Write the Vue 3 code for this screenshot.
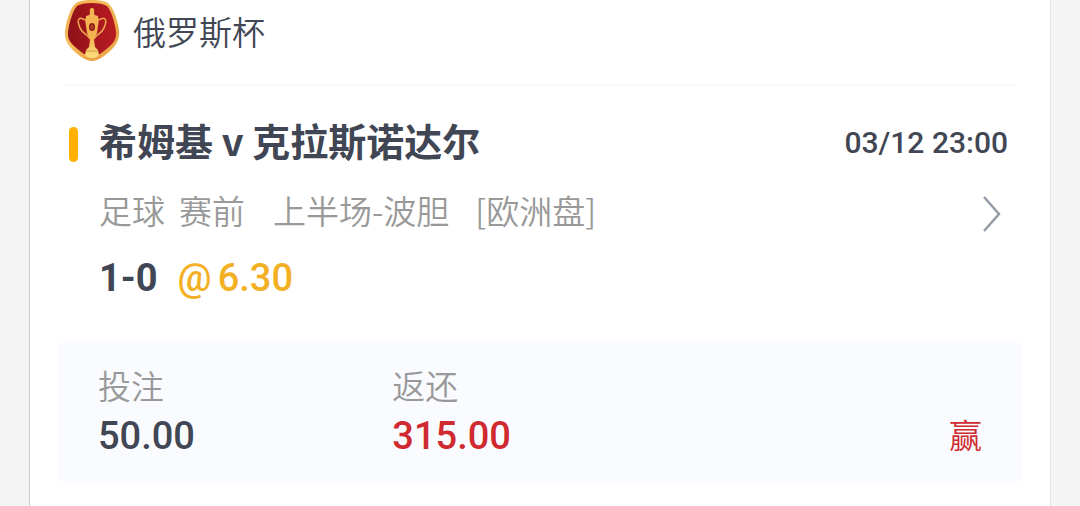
<script setup>
const bet = {
  league: '俄罗斯杯',
  match: '希姆基 v 克拉斯诺达尔',
  time: '03/12 23:00',
  sport: '足球',
  phase: '赛前',
  market: '上半场-波胆',
  oddsType: '[欧洲盘]',
  pick: '1-0',
  odds: '6.30',
  stake: '50.00',
  payout: '315.00',
  result: '赢',
}
</script>

<template>
  <main class="page">
    <article class="card">
      <header class="league">
        <svg class="crest" viewBox="0 0 56 62" aria-hidden="true">
          <defs>
            <linearGradient id="crest-gold" x1="0" y1="0" x2="1" y2="1">
              <stop offset="0" stop-color="#f0a84a" />
              <stop offset="0.4" stop-color="#f6bf5c" />
              <stop offset="0.75" stop-color="#e9a245" />
              <stop offset="1" stop-color="#f7c767" />
            </linearGradient>
            <linearGradient id="crest-red" x1="0" y1="0" x2="1" y2="0">
              <stop offset="0" stop-color="#8d1119" />
              <stop offset="0.5" stop-color="#a5161d" />
              <stop offset="1" stop-color="#b91c22" />
            </linearGradient>
            <linearGradient id="cup-gold" x1="0" y1="0" x2="0" y2="1">
              <stop offset="0" stop-color="#f5b654" />
              <stop offset="0.6" stop-color="#f3b350" />
              <stop offset="1" stop-color="#fbdf80" />
            </linearGradient>
          </defs>
          <path fill="url(#crest-gold)" d="M28 0C36 0 42 1 45 4C50 9 54 22 55 31C55.500 37 54 42 50 47C45 53 35 61 28 61C21 61 11 53 6 47C2 42 0.500 37 1 31C2 22 6 9 11 4C14 1 20 0 28 0Z" />
          <path fill="url(#crest-red)" d="M28 3C35 3 40 4 43 6C47 10 51 23 52 32C52.500 37 51 41 47 45C44 48 40 51 36 54H20C16 51 12 48 9 45C5 41 3.500 37 4 32C5 23 9 10 13 6C16 4 21 3 28 3Z" />
          <g fill="none" stroke="#efaa50" stroke-width="1.500">
            <path d="M21 20C15 16 13 20 15 25C17 34 24 34 26 39" />
            <path d="M35 20C41 16 43 20 41 25C39 34 32 34 30 39" />
          </g>
          <path fill="url(#cup-gold)" d="M28 8C30 8 30.500 10 30 12L30.500 15L34 16V18L35 19L33 33C32 36 30 37 30 40L31 47L34 50L35 55C32 58 30 58 28 58C26 58 24 58 21 55L22 50L25 47L26 40C26 37 24 36 23 33L21 19L22 18V16L25.500 15L26 12C25.500 10 26 8 28 8Z" />
          <ellipse cx="28" cy="27" rx="3" ry="4" fill="#8f1a19" />
          <ellipse cx="28" cy="27" rx="1.500" ry="2.500" fill="#b34b27" />
          <path fill="none" stroke="#d39a42" d="M22 51H34" />
        </svg>
        <span class="league-name">{{ bet.league }}</span>
      </header>

      <section class="event">
        <div class="title-row">
          <span class="marker"></span>
          <h1 class="match">{{ bet.match }}</h1>
          <time class="time">{{ bet.time }}</time>
        </div>
        <div class="market-row">
          <p class="market">
            <span>{{ bet.sport }}</span>
            <span class="phase">{{ bet.phase }}</span>
            <span class="market-name">{{ bet.market }}</span>
            <span class="odds-type">{{ bet.oddsType }}</span>
          </p>
          <button class="more" type="button" aria-label="详情">
            <svg class="chevron" viewBox="0 0 20 36" aria-hidden="true">
              <path d="M2 1L17 18L2 35" fill="none" stroke="#939ca6" stroke-width="2.500" />
            </svg>
          </button>
        </div>
        <div class="pick-row">
          <strong class="pick">{{ bet.pick }}</strong>
          <span class="odds"><span>@</span><span>{{ bet.odds }}</span></span>
        </div>
      </section>

      <dl class="summary">
        <div class="cell">
          <dt>投注</dt>
          <dd>{{ bet.stake }}</dd>
        </div>
        <div class="cell">
          <dt>返还</dt>
          <dd class="win">{{ bet.payout }}</dd>
        </div>
        <div class="result">{{ bet.result }}</div>
      </dl>
    </article>
  </main>
</template>

<style>
body {
  margin: 0;
  background: #f4f4f4;
}
</style>

<style scoped>
.page {
  padding: 0 29px;
  color: #414654;
  font-family: "Noto Sans CJK SC", sans-serif;
}
.time,
.pick-row,
.cell dd {
  font-family: Roboto, "Noto Sans CJK SC", sans-serif;
}
.card {
  box-sizing: border-box;
  min-height: 100vh;
  padding: 0 28px 22px;
  background: #fff;
  border-left: 1px solid #c6cccd;
  border-right: 1px solid #e1e2e4;
}
.league {
  display: flex;
  align-items: flex-start;
  gap: 13px;
  height: 84px;
  margin: 0 6px;
  border-bottom: 2px solid #f9f9fa;
}
.crest {
  flex: none;
  width: 56px;
  height: 62px;
}
.league-name {
  font-size: 33px;
  font-weight: 350;
  line-height: 62px;
}
.event {
  padding: 34px 14px 0 11px;
}
.title-row,
.market-row,
.pick-row {
  display: flex;
  align-items: center;
}
.title-row {
  height: 48px;
}
.marker {
  width: 9px;
  height: 35px;
  margin-right: 21px;
  border-radius: 5px;
  background: #ffb000;
}
.match {
  flex: 1;
  margin: 0;
  padding-bottom: 8px;
  font-size: 38px;
  font-weight: 700;
  line-height: 40px;
}
.time {
  padding-bottom: 2px;
  font-size: 30px;
  font-weight: 500;
  line-height: 46px;
}
.market-row {
  justify-content: space-between;
  height: 48px;
  margin-top: 22px;
  padding: 0 6px 0 30px;
}
.market {
  display: flex;
  margin: 0;
  padding-bottom: 8px;
  color: #999;
  font-size: 33px;
  font-weight: 350;
  line-height: 40px;
}
.phase {
  margin-left: 14px;
}
.market-name {
  margin-left: 28px;
}
.odds-type {
  margin-left: 26px;
}
.more {
  display: flex;
  padding: 0;
  border: 0;
  background: none;
}
.chevron {
  width: 20px;
  height: 36px;
}
.pick-row {
  gap: 20px;
  height: 48px;
  margin-top: 16px;
  padding-left: 30px;
  font-size: 38px;
}
.pick {
  font-weight: 700;
}
.odds {
  display: flex;
  gap: 6px;
  color: #f3b024;
  font-weight: 500;
}
.summary {
  display: flex;
  align-items: flex-end;
  margin: 38px 0 0;
  padding: 23px 40px;
  border-radius: 10px;
  background: #fafbff;
}
.cell {
  width: 33.3%;
}
.cell dt {
  padding-bottom: 4px;
  color: #999;
  font-size: 33px;
  font-weight: 350;
  line-height: 44px;
}
.cell dd {
  margin: 0;
  font-size: 38px;
  font-weight: 500;
  line-height: 50px;
}
.cell .win {
  color: #cf2a2f;
}
.result {
  margin-left: auto;
  padding-bottom: 4px;
  color: #cf2a2f;
  font-size: 33px;
  font-weight: 350;
  line-height: 46px;
}
</style>
